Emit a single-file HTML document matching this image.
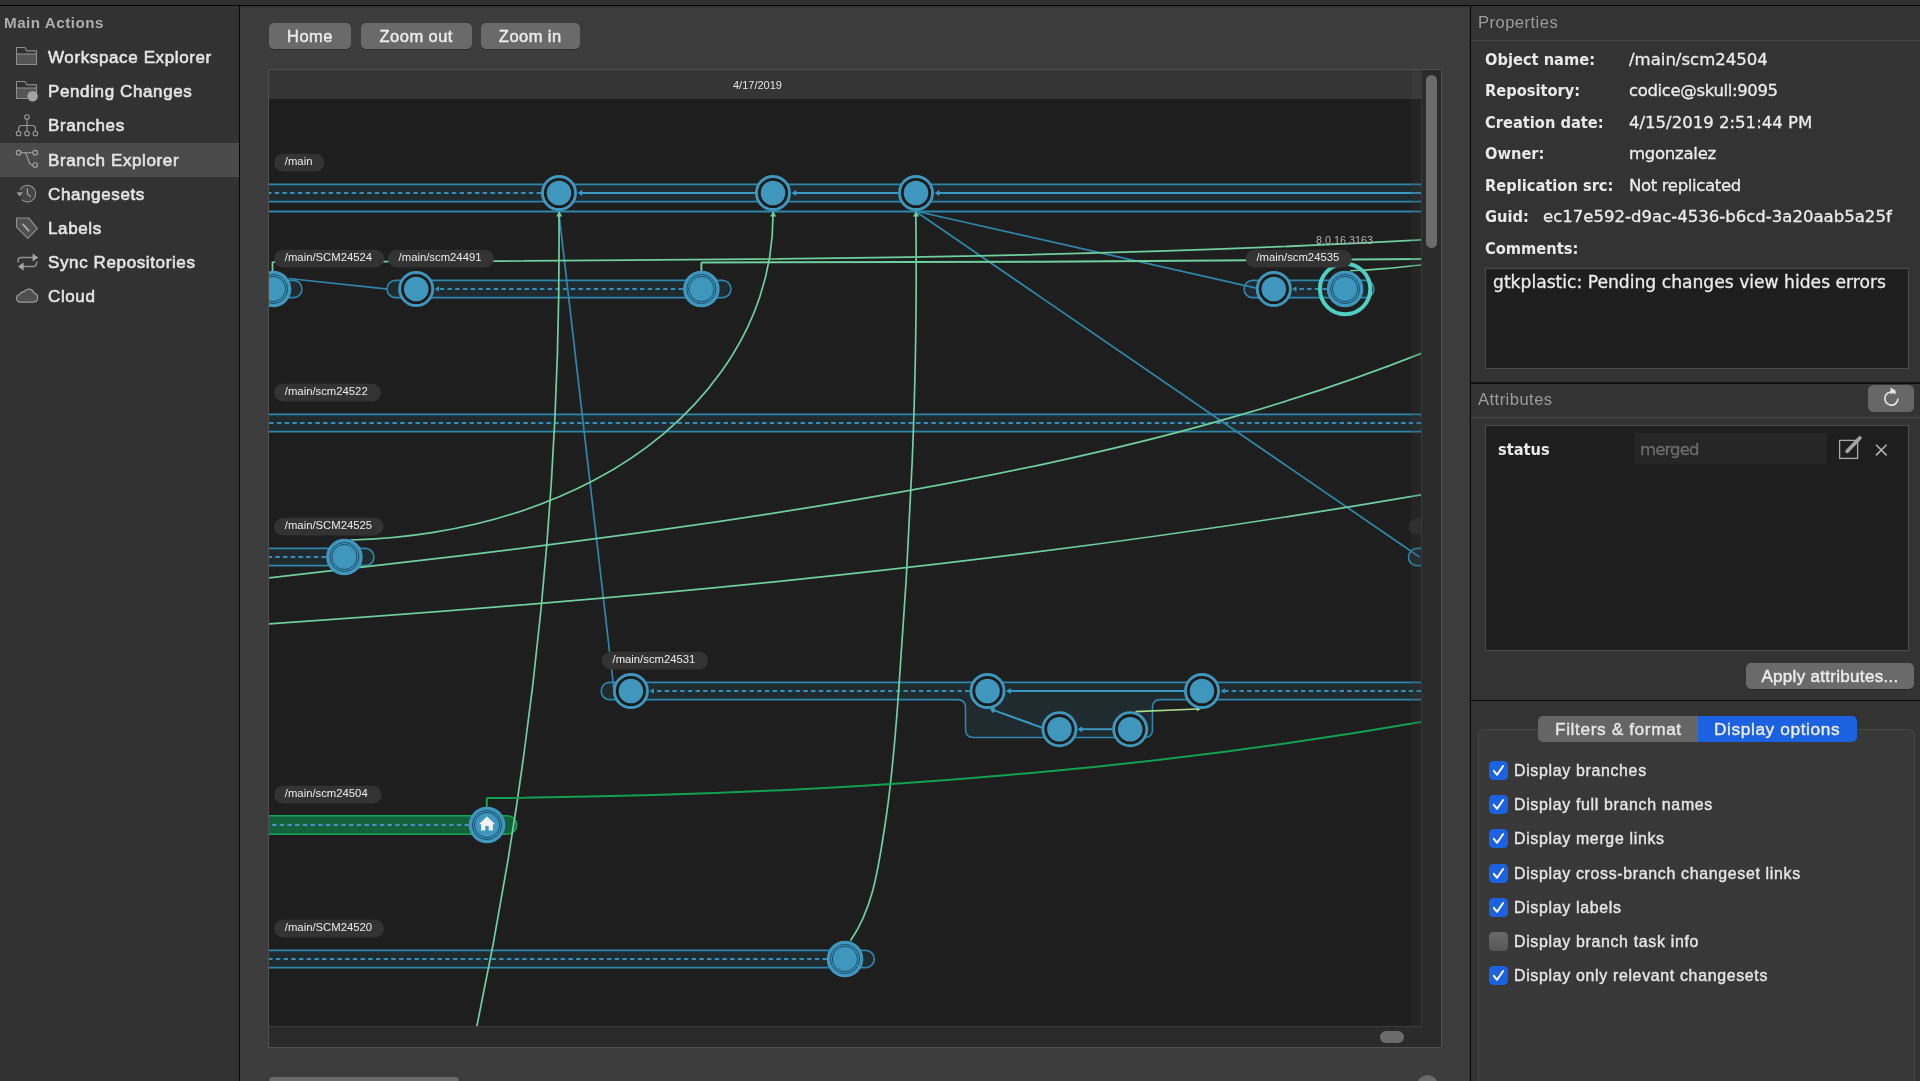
<!DOCTYPE html>
<html lang="en">
<head>
<meta charset="utf-8">
<title>Branch Explorer</title>
<style>
*{box-sizing:border-box;margin:0;padding:0}
html,body{width:1920px;height:1081px;overflow:hidden;background:#3c3c3c}
body{position:relative;font-family:"Liberation Sans",sans-serif;color:#e6e6e6;-webkit-font-smoothing:antialiased}
.abs{position:absolute}
.sbhead,.sbitem span,.btn,.phead,.plabel,.pval,.clabel,.gtxt,#graph{will-change:transform}
#topstrip{left:0;top:0;width:1920px;height:5px;background:#303030}
#topline{left:0;top:5px;width:1920px;height:1px;background:#050505}
#sidebar{left:0;top:6px;width:239px;height:1075px;background:#323232}
#vdiv1{left:239px;top:6px;width:2px;height:1075px;background:linear-gradient(90deg,#070707 0,#070707 1px,#303030 1px,#303030 2px)}
#center{left:240px;top:6px;width:1230px;height:1075px;background:#3c3c3c}
#vdiv2{left:1469px;top:6px;width:3px;height:1075px;background:linear-gradient(90deg,#323232 0,#323232 1px,#070707 1px,#070707 2px,#2e2e2e 2px,#2e2e2e 3px)}
#right{left:1471px;top:6px;width:449px;height:1075px;background:#333333}
/* sidebar */
.sbhead{left:4px;top:12.500px;font-weight:700;font-size:15.200px;letter-spacing:.5px;color:#adadad;line-height:20px;white-space:nowrap}
.sbitem{left:0;width:239px;height:34px;white-space:nowrap}
.sbitem span{position:absolute;left:48px;top:1px;line-height:34px;font-size:17px;letter-spacing:.62px;color:#e4e4e4;-webkit-text-stroke:.6px #e4e4e4}
.sbitem svg{position:absolute;left:14px;top:5px;width:26px;height:24px;overflow:visible}
.sbsel{background:#4a4a4a}
/* toolbar buttons */
.btn{background:#6a6a6a;border-radius:5px;color:#ececec;font-size:17px;letter-spacing:.45px;text-align:center;white-space:nowrap;box-shadow:0 1px 0 rgba(0,0,0,.25);-webkit-text-stroke:.45px #ececec}
/* right panel */
.phead{font-size:16.6px;letter-spacing:.45px;color:#9c9c9c;white-space:nowrap;line-height:20px}
.hline{height:1px;background:#464646}
.bline{height:1px;background:#0a0a0a}
.plabel{font-family:"DejaVu Sans Condensed","DejaVu Sans",sans-serif;font-weight:700;font-size:16.3px;color:#e9e9e9;white-space:nowrap;line-height:20px}
.pval{font-family:"DejaVu Sans",sans-serif;font-size:16.55px;color:#ececec;-webkit-text-stroke:.3px currentColor;white-space:nowrap;line-height:20px}
.darkbox{background:#1e1e1e;border:1px solid #4c4c4c}
.chk{width:19px;height:19px;border-radius:4.5px;background:#1c62e0}
.chk svg{position:absolute;left:0;top:0;width:19px;height:19px}
.chkoff{background:linear-gradient(#696969,#565656)}
.clabel{font-size:15.9px;letter-spacing:.68px;color:#e6e6e6;white-space:nowrap;line-height:20px;-webkit-text-stroke:.4px #e6e6e6}
</style>
</head>
<body>
<div id="topstrip" class="abs"></div>
<div id="topline" class="abs"></div>
<div id="sidebar" class="abs"></div>
<div id="vdiv1" class="abs"></div>
<div id="center" class="abs"></div>
<div id="vdiv2" class="abs"></div>
<div id="right" class="abs"></div>

<!-- SIDEBAR -->
<div class="abs sbhead">Main Actions</div>
<div class="abs sbitem" style="top:40px"><svg viewBox="0 0 26 24"><path d="M2.5 19.5V2.5h8.2l2.4 3.4h9.4v13.6z" fill="none" stroke="#8e8e8e" stroke-width="1.1"/><rect x="3" y="9" width="19" height="10" fill="#555"/><path d="M2.5 9h20" stroke="#8e8e8e" stroke-width="1.1"/></svg><span>Workspace Explorer</span></div>
<div class="abs sbitem" style="top:74px"><svg viewBox="0 0 26 24"><path d="M2.5 19.5V2.5h8.2l2.4 3.4h9.4v13.6z" fill="none" stroke="#8e8e8e" stroke-width="1.1"/><rect x="3" y="9" width="19" height="10" fill="#555"/><path d="M2.5 9h20" stroke="#8e8e8e" stroke-width="1.1"/><circle cx="18.6" cy="17.3" r="5.2" fill="#a4a4a4"/></svg><span>Pending Changes</span></div>
<div class="abs sbitem" style="top:108px"><svg viewBox="0 0 26 24"><g fill="none" stroke="#9a9a9a" stroke-width="1.1"><circle cx="13" cy="4" r="2.3"/><circle cx="4.6" cy="20.5" r="2.3"/><circle cx="13" cy="20.5" r="2.3"/><circle cx="21.4" cy="20.5" r="2.3"/><path d="M13 6.3v11.9M4.6 18.2v-2.5q0-3.2 3.2-3.2h10.4q3.2 0 3.2 3.2v2.5"/></g></svg><span>Branches</span></div>
<div class="abs sbitem sbsel" style="top:143px"><svg viewBox="0 0 26 24"><g fill="none" stroke="#a6a6a6" stroke-width="1.1"><circle cx="4.6" cy="4.7" r="2.3"/><circle cx="21.2" cy="4.7" r="2.3"/><circle cx="21.2" cy="17" r="2.3"/><path d="M6.9 4.7h12M10 4.7c5 0 2.5 12.3 8.9 12.3"/></g></svg><span>Branch Explorer</span></div>
<div class="abs sbitem" style="top:177px"><svg viewBox="0 0 26 24"><g fill="none" stroke="#8e8e8e" stroke-width="1.2"><path d="M6.2 7.4A8.3 8.3 0 1 1 7.6 17.6" fill="#444"/><path d="M13.4 6.4v5.3l3.3 3.2" stroke="#a4a4a4"/></g><path d="M2.6 10.4l6.3-.4-3.2 4.6z" fill="#9a9a9a"/></svg><span>Changesets</span></div>
<div class="abs sbitem" style="top:211px"><svg viewBox="0 0 26 24"><path d="M2.6 2h12.2l8.6 10.6-9.7 9.8L2.6 11.2z" fill="#505050" stroke="#8e8e8e" stroke-width="1.2" stroke-linejoin="round"/><path d="M9.2 8.6l5.4 6" stroke="#a8a8a8" stroke-width="2" stroke-linecap="round"/></svg><span>Labels</span></div>
<div class="abs sbitem" style="top:245px"><svg viewBox="0 0 26 24"><g fill="none" stroke="#909090" stroke-width="1.5"><path d="M4 12.5v-1.6q0-3.3 3.3-3.3h12"/><path d="M22.6 11.5v1.6q0 3.3-3.3 3.3h-11"/></g><path d="M18.6 3.6l5.6 4-5.6 4z" fill="#a6a6a6"/><path d="M9.6 12.4l-5.6 4 5.6 4z" fill="#a6a6a6"/></svg><span>Sync Repositories</span></div>
<div class="abs sbitem" style="top:279px"><svg viewBox="0 0 26 24"><path d="M6.6 18.2a4 4 0 0 1-.7-7.940 4.300 4.300 0 0 1 4.200-2.700 5.600 5.600 0 0 1 10 1.600 4.600 4.600 0 0 1-.5 9.040z" fill="#505050" stroke="#9a9a9a" stroke-width="1.2" stroke-linejoin="round"/></svg><span>Cloud</span></div>


<!-- TOOLBAR -->
<div class="abs btn" style="left:269px;top:23px;width:82px;height:26px;line-height:27px;font-size:16.5px">Home</div>
<div class="abs btn" style="left:361px;top:23px;width:110.500px;height:26px;line-height:27px;font-size:16.5px">Zoom out</div>
<div class="abs btn" style="left:481px;top:23px;width:98.500px;height:26px;line-height:27px;font-size:16.5px">Zoom in</div>

<!-- GRAPH PANEL -->
<div class="abs" style="left:268px;top:69px;width:1174px;height:979px;border:1px solid #505050;background:#2b2b2b"></div>
<div class="abs" style="left:269px;top:70px;width:1152px;height:29px;background:#353535"></div>
<div class="abs" style="left:269px;top:99px;width:1152px;height:927px;background:#1e1e1e"></div>
<div class="abs gtxt" style="left:732.5px;top:78px;font-size:11px;line-height:14px;color:#e4e4e4;white-space:nowrap">4/17/2019</div>
<!--GS0--><svg class="abs" id="graph" style="left:269px;top:99px" width="1152" height="927" viewBox="269 99 1152 927">
<style>.pl{font:11.3px "Liberation Sans",sans-serif;fill:#ececec}.lb{font:10.8px "Liberation Sans",sans-serif;fill:#b0b0b0}</style>
<rect x="269" y="184.4" width="1152" height="17.2" fill="#202b2f"/>
<path d="M269 184.4H1421M269 201.6H1421" fill="none" stroke="#2f86ac" stroke-width="1.6"/>
<path d="M269 211.5H1421" stroke="#2f86ac" stroke-width="1.9" fill="none"/>
<path d="M240 280.4H293.4A8.6 8.6 0 0 1 293.4 297.6H240" fill="#202b2f" stroke="#2f86ac" stroke-width="1.6"/>
<path d="M395.6 280.4H722.4A8.6 8.6 0 0 1 722.4 297.6H395.6A8.6 8.6 0 0 1 395.6 280.4Z" fill="#202b2f" stroke="#2f86ac" stroke-width="1.6"/>
<path d="M1252.6 280.4H1365.4A8.6 8.6 0 0 1 1365.4 297.6H1252.6A8.6 8.6 0 0 1 1252.6 280.4Z" fill="#202b2f" stroke="#2f86ac" stroke-width="1.6"/>
<rect x="269" y="414.4" width="1152" height="17.2" fill="#202b2f"/>
<path d="M269 414.4H1421M269 431.6H1421" fill="none" stroke="#2f86ac" stroke-width="1.6"/>
<path d="M269 548.4H365.4A8.6 8.6 0 0 1 365.4 565.6H269" fill="#202b2f" stroke="#2f86ac" stroke-width="1.6"/>
<path d="M1440 548.4H1417.1A8.6 8.6 0 0 0 1417.1 565.6H1440" fill="#202b2f" stroke="#2f86ac" stroke-width="1.6"/>
<path d="M1421 682.4H609.7A8.6 8.6 0 0 0 609.7 699.6H957.5Q965.5 699.6 965.5 707.6V729.5Q965.5 737.5 973.5 737.5H1144.5Q1152.5 737.5 1152.5 729.5V707.6Q1152.5 699.6 1160.5 699.6H1421" fill="#202b2f" stroke="#2f86ac" stroke-width="1.6"/>
<path d="M269 815.8H507.50000000000006A9.2 9.2 0 0 1 507.50000000000006 834.2H269" fill="#14603a" stroke="#13a552" stroke-width="1.6"/>
<path d="M269 950.4H865.6999999999999A8.6 8.6 0 0 1 865.6999999999999 967.6H269" fill="#202b2f" stroke="#2f86ac" stroke-width="1.6"/>
<path d="M541 193H269" stroke="#368db4" stroke-width="1.8" stroke-dasharray="4.5 3.2" fill="none"/>
<path d="M755 193H581.5" stroke="#3a9ac4" stroke-width="1.9" fill="none"/>
<path d="M577.5 193l4.8 -3v6z" fill="#3a9ac4"/>
<path d="M898 193H795.5" stroke="#3a9ac4" stroke-width="1.9" fill="none"/>
<path d="M791.5 193l4.8 -3v6z" fill="#3a9ac4"/>
<path d="M1421 193H938.5" stroke="#3a9ac4" stroke-width="1.9" fill="none"/>
<path d="M934.5 193l4.8 -3v6z" fill="#3a9ac4"/>
<path d="M683 289H438.5" stroke="#368db4" stroke-width="1.8" stroke-dasharray="4.5 3.2" fill="none"/>
<path d="M434.5 289l4.5 -2.8v5.6z" fill="#368db4"/>
<path d="M1327 289H1296" stroke="#368db4" stroke-width="1.8" stroke-dasharray="4.5 3.2" fill="none"/>
<path d="M1292 289l4.5 -2.8v5.6z" fill="#368db4"/>
<path d="M1421 423H269" stroke="#368db4" stroke-width="1.8" stroke-dasharray="4.5 3.2" fill="none"/>
<path d="M326 557H269" stroke="#368db4" stroke-width="1.8" stroke-dasharray="4.5 3.2" fill="none"/>
<path d="M969.5 691H653.5" stroke="#368db4" stroke-width="1.8" stroke-dasharray="4.5 3.2" fill="none"/>
<path d="M649.5 691l4.5 -2.8v5.6z" fill="#368db4"/>
<path d="M1184 691H1010" stroke="#3a9ac4" stroke-width="1.9" fill="none"/>
<path d="M1006 691l4.8 -3v6z" fill="#3a9ac4"/>
<path d="M1421 691H1224.5" stroke="#368db4" stroke-width="1.8" stroke-dasharray="4.5 3.2" fill="none"/>
<path d="M1220.5 691l4.5 -2.8v5.6z" fill="#368db4"/>
<path d="M1112 729.2H1081.5" stroke="#3a9ac4" stroke-width="1.9" fill="none"/>
<path d="M1077.5 729.2l4.8 -3v6z" fill="#3a9ac4"/>
<path d="M1042 727.6L993.5 710.2" stroke="#3a9ac4" stroke-width="1.9" fill="none"/><path d="M989.6 708.7l5.8 -.9 -2.2 5.6z" fill="#3a9ac4"/>
<path d="M1135.5 711.6L1197 709" stroke="#a3dc8c" stroke-width="1.6" fill="none"/><path d="M1201.5 708.7l-5 -2.4 .3 5z" fill="#a3dc8c"/>
<path d="M469 825H269" stroke="#4a8fc0" stroke-width="1.8" stroke-dasharray="4.5 3.2" fill="none"/>
<path d="M827 959H269" stroke="#368db4" stroke-width="1.8" stroke-dasharray="4.5 3.2" fill="none"/>
<path d="M558.8 212L614.2 692M919.5 212L1257.5 288.3M916.5 212L1419.5 557M288.6 278.5L388 289.2" stroke="#2f86ac" stroke-width="1.7" fill="none"/>
<path d="M773.0 213.6C773.2 242.4 768.6 270.6 759.7 297.2C750.8 323.9 737.6 348.9 721.2 371.8C704.9 394.6 685.5 415.3 664.1 433.3C642.7 451.3 619.3 466.9 594.4 480.1C569.5 493.3 543.2 504.1 516.2 512.8C489.1 521.5 461.4 528.0 433.5 532.4C405.7 536.9 377.8 539.4 350.5 540.0" stroke="#6fcf9d" stroke-width="1.7" fill="none"/>
<path d="M915.8 214.9C916.4 255.8 916.3 296.6 915.7 337.4C915.1 378.1 913.9 418.7 912.3 459.4C910.6 500.0 908.5 540.6 906.1 581.2C903.6 621.8 900.8 662.5 897.8 703.3C894.7 744.0 891.3 784.8 885.0 825.0C878.6 865.1 873.9 906.8 850.5 940.7" stroke="#6fcf9d" stroke-width="1.7" fill="none"/>
<path d="M269.2 577.8C334.0 570.6 398.9 563.2 463.9 555.3C528.8 547.5 593.7 539.3 658.5 530.2C723.3 521.2 788.0 511.3 852.4 500.4C916.9 489.5 981.2 477.5 1045.1 463.8C1109.0 450.1 1172.5 434.6 1235.3 416.4C1298.0 398.3 1360.1 377.6 1421.2 353.4" stroke="#6fcf9d" stroke-width="1.7" fill="none"/>
<path d="M269.0 623.8C653.0 597.8 1037.0 561.1 1421.0 494.8" stroke="#6fcf9d" stroke-width="1.7" fill="none"/>
<path d="M559.0 215.0C560.9 485.5 533.5 756.0 476.8 1026.5" stroke="#6fcf9d" stroke-width="1.7" fill="none"/>
<path d="M272.5 272V262" stroke="#6fcf9d" stroke-width="1.8" fill="none"/>
<path d="M272.5 262.2C655.3 259.9 1038.2 261.0 1421.0 239.9" stroke="#6fcf9d" stroke-width="1.8" fill="none"/>
<path d="M701.4 272V262.4" stroke="#6fcf9d" stroke-width="2" fill="none"/>
<path d="M701.4 262.4C941.3 262.5 1181.1 261.3 1421.0 258.9" stroke="#6fcf9d" stroke-width="2" fill="none"/>
<path d="M1350.0 270.8C1361.7 270.1 1373.2 269.6 1385.0 268.6C1396.8 267.6 1409.0 266.2 1421.0 265.0" stroke="#6fcf9d" stroke-width="1.6" fill="none"/>
<path d="M486.8 808V798" stroke="#12a150" stroke-width="2" fill="none"/>
<path d="M486.8 798.0C798.2 796.0 1109.6 776.1 1421.0 721.9" stroke="#12a150" stroke-width="2" fill="none"/>
<path d="M559.2 211l-3 5.4h6z" fill="#6fcf9d"/>
<path d="M773.2 211l-3 5.4h6z" fill="#6fcf9d"/>
<path d="M916 211l-3 5.4h6z" fill="#6fcf9d"/>
<circle cx="559" cy="193" r="18" fill="#3f97bd"/><circle cx="559" cy="193" r="15.1" fill="#1b1b1b"/><circle cx="559" cy="193" r="12.3" fill="#3f97bd"/>
<circle cx="773" cy="193" r="18" fill="#3f97bd"/><circle cx="773" cy="193" r="15.1" fill="#1b1b1b"/><circle cx="773" cy="193" r="12.3" fill="#3f97bd"/>
<circle cx="916" cy="193" r="18" fill="#3f97bd"/><circle cx="916" cy="193" r="15.1" fill="#1b1b1b"/><circle cx="916" cy="193" r="12.3" fill="#3f97bd"/>
<circle cx="273" cy="289" r="18.3" fill="#3f97bd"/><circle cx="273" cy="289" r="14.6" fill="none" stroke="#1a4c6b" stroke-width="1"/><circle cx="273" cy="289" r="12.6" fill="none" stroke="#1a4c6b" stroke-width="1"/>
<circle cx="416.2" cy="289" r="18" fill="#3f97bd"/><circle cx="416.2" cy="289" r="15.1" fill="#1b1b1b"/><circle cx="416.2" cy="289" r="12.3" fill="#3f97bd"/>
<circle cx="701.4" cy="289" r="18.3" fill="#3f97bd"/><circle cx="701.4" cy="289" r="14.6" fill="none" stroke="#1a4c6b" stroke-width="1"/><circle cx="701.4" cy="289" r="12.6" fill="none" stroke="#1a4c6b" stroke-width="1"/>
<circle cx="1273.8" cy="289" r="18" fill="#3f97bd"/><circle cx="1273.8" cy="289" r="15.1" fill="#1b1b1b"/><circle cx="1273.8" cy="289" r="12.3" fill="#3f97bd"/>
<circle cx="1345.1" cy="289" r="18.3" fill="#3f97bd"/><circle cx="1345.1" cy="289" r="14.6" fill="none" stroke="#1a4c6b" stroke-width="1"/><circle cx="1345.1" cy="289" r="12.6" fill="none" stroke="#1a4c6b" stroke-width="1"/>
<circle cx="1345.1" cy="289" r="25.2" fill="none" stroke="#4fcfc2" stroke-width="4"/>
<circle cx="344.4" cy="557" r="18.3" fill="#3f97bd"/><circle cx="344.4" cy="557" r="14.6" fill="none" stroke="#1a4c6b" stroke-width="1"/><circle cx="344.4" cy="557" r="12.6" fill="none" stroke="#1a4c6b" stroke-width="1"/>
<circle cx="630.9" cy="691" r="18" fill="#3f97bd"/><circle cx="630.9" cy="691" r="15.1" fill="#1b1b1b"/><circle cx="630.9" cy="691" r="12.3" fill="#3f97bd"/>
<circle cx="987.5" cy="691" r="18" fill="#3f97bd"/><circle cx="987.5" cy="691" r="15.1" fill="#1b1b1b"/><circle cx="987.5" cy="691" r="12.3" fill="#3f97bd"/>
<circle cx="1202" cy="691" r="18" fill="#3f97bd"/><circle cx="1202" cy="691" r="15.1" fill="#1b1b1b"/><circle cx="1202" cy="691" r="12.3" fill="#3f97bd"/>
<circle cx="1059.4" cy="729.2" r="18" fill="#3f97bd"/><circle cx="1059.4" cy="729.2" r="15.1" fill="#1b1b1b"/><circle cx="1059.4" cy="729.2" r="12.3" fill="#3f97bd"/>
<circle cx="1130.2" cy="729.2" r="18" fill="#3f97bd"/><circle cx="1130.2" cy="729.2" r="15.1" fill="#1b1b1b"/><circle cx="1130.2" cy="729.2" r="12.3" fill="#3f97bd"/>
<circle cx="487" cy="825" r="18.3" fill="#3f97bd"/><circle cx="487" cy="825" r="14.6" fill="none" stroke="#1a4c6b" stroke-width="1"/><circle cx="487" cy="825" r="12.6" fill="none" stroke="#1a4c6b" stroke-width="1"/>
<path d="M487 816.6l8.2 7.6h-2.300v6.400h-4.200v-4.600h-3.400v4.600h-4.200v-6.400h-2.300z" fill="#f2f2f2"/>
<circle cx="845" cy="959" r="18.3" fill="#3f97bd"/><circle cx="845" cy="959" r="14.6" fill="none" stroke="#1a4c6b" stroke-width="1"/><circle cx="845" cy="959" r="12.6" fill="none" stroke="#1a4c6b" stroke-width="1"/>
<rect x="274" y="153.8" width="50.5" height="17.6" rx="8.8" fill="#333333"/>
<text x="284.8" y="165.2" class="pl">/main</text>
<rect x="274" y="249.8" width="110.2" height="17.6" rx="8.8" fill="#333333"/>
<text x="284.8" y="261.2" class="pl">/main/SCM24524</text>
<rect x="387.8" y="249.8" width="106.2" height="17.6" rx="8.8" fill="#333333"/>
<text x="398.6" y="261.2" class="pl">/main/scm24491</text>
<rect x="1245.6" y="249.8" width="106.3" height="17.6" rx="8.8" fill="#333333"/>
<text x="1256.4" y="261.2" class="pl">/main/scm24535</text>
<rect x="274" y="383.8" width="107.0" height="17.6" rx="8.8" fill="#333333"/>
<text x="284.8" y="395.2" class="pl">/main/scm24522</text>
<rect x="274" y="517.8" width="109.6" height="17.6" rx="8.8" fill="#333333"/>
<text x="284.8" y="529.2" class="pl">/main/SCM24525</text>
<rect x="1408.3" y="518.2" width="40" height="16.4" rx="8.2" fill="#2c2c2c"/>
<rect x="601.7" y="651.8" width="106.5" height="17.6" rx="8.8" fill="#333333"/>
<text x="612.5" y="663.2" class="pl">/main/scm24531</text>
<rect x="274" y="785.8" width="107.7" height="17.6" rx="8.8" fill="#333333"/>
<text x="284.8" y="797.2" class="pl">/main/scm24504</text>
<rect x="274" y="919.8" width="110.0" height="17.6" rx="8.8" fill="#333333"/>
<text x="284.8" y="931.2" class="pl">/main/SCM24520</text>
<text x="1316" y="243.8" class="lb">8.0.16.3163</text>
</svg><!--GS1-->
<div class="abs" style="left:1411px;top:99px;width:10px;height:927px;background:rgba(60,60,60,.22)"></div>
<div class="abs" style="left:269px;top:1026px;width:1153px;height:1px;background:#3b3b3b"></div>
<div class="abs" style="left:1421px;top:70px;width:1px;height:957px;background:#393939"></div>
<div class="abs" style="left:240px;top:6px;width:1230px;height:2px;background:#363636"></div>
<div class="abs" style="left:1412px;top:70px;width:9px;height:29px;background:rgba(70,70,70,.35)"></div>
<div class="abs" style="left:1426px;top:75px;width:11px;height:173px;border-radius:5.5px;background:#6b6b6b"></div>
<div class="abs" style="left:1380px;top:1031px;width:24px;height:12px;border-radius:6px;background:#6b6b6b"></div>
<div class="abs" style="left:269px;top:1076.800px;width:190px;height:10px;border-radius:4px 4px 0 0;background:#6a6a6a"></div>
<div class="abs" style="left:1417px;top:1075px;width:21px;height:21px;border-radius:50%;background:#6a6a6a"></div>


<!-- RIGHT PANEL -->
<div class="abs phead" style="left:1478px;top:13px">Properties</div>
<div class="abs hline" style="left:1471px;top:39.5px;width:449px;height:1.3px"></div>
<div class="abs plabel" style="left:1485px;top:49.75px">Object name:</div><div class="abs pval" style="left:1628.5px;top:49.75px">/main/scm24504</div>
<div class="abs plabel" style="left:1485px;top:81.25px">Repository:</div><div class="abs pval" style="left:1628.5px;top:81.25px;letter-spacing:-.37px">codice@skull:9095</div>
<div class="abs plabel" style="left:1485px;top:112.75px">Creation date:</div><div class="abs pval" style="left:1628.5px;top:112.75px">4/15/2019 2:51:44 PM</div>
<div class="abs plabel" style="left:1485px;top:144.25px">Owner:</div><div class="abs pval" style="left:1628.5px;top:144.25px;letter-spacing:-.28px">mgonzalez</div>
<div class="abs plabel" style="left:1485px;top:175.75px">Replication src:</div><div class="abs pval" style="left:1628.5px;top:175.75px;letter-spacing:-.36px">Not replicated</div>
<div class="abs plabel" style="left:1485px;top:207.25px">Guid:</div><div class="abs pval" style="left:1542.5px;top:207.25px">ec17e592-d9ac-4536-b6cd-3a20aab5a25f</div>
<div class="abs plabel" style="left:1485px;top:238.75px">Comments:</div>
<div class="abs darkbox" style="left:1485px;top:267.500px;width:424px;height:101px"></div>
<div class="abs pval" style="left:1493px;top:271.5px;font-size:17.15px">gtkplastic: Pending changes view hides errors</div>
<div class="abs" style="left:1471px;top:382px;width:449px;height:2px;background:linear-gradient(#1c1c1c,#070707)"></div>
<div class="abs phead" style="left:1478px;top:390px">Attributes</div>
<div class="abs" style="left:1868px;top:385px;width:46px;height:27px;border-radius:5.500px;background:#676767"><svg width="46" height="27" viewBox="0 0 46 27" style="position:absolute;left:0;top:0"><path d="M27.8 8.600A6.600 6.600 0 1 0 30 13.600" fill="none" stroke="#e8e8e8" stroke-width="1.600"/><path d="M22.600 2.600l5.600 3.400-5.600 3.600z" fill="#e8e8e8"/></svg></div>
<div class="abs hline" style="left:1471px;top:416.500px;width:449px;height:1.300px"></div>
<div class="abs darkbox" style="left:1485px;top:425px;width:424px;height:226px"></div>
<div class="abs plabel" style="left:1497.5px;top:439.75px">status</div>
<div class="abs" style="left:1634px;top:433px;width:193px;height:31px;background:#262626"></div>
<div class="abs pval" style="left:1640px;top:439.5px;color:#6c6c6c;letter-spacing:-.9px">merged</div>
<svg class="abs" style="left:1838px;top:434px" width="26" height="26" viewBox="0 0 26 26"><rect x="1.600" y="6.400" width="18" height="18" fill="none" stroke="#a9a9a9" stroke-width="1.300"/><path d="M9.200 17.200L21.800 4" stroke="#a4a4a4" stroke-width="3.800" stroke-linecap="round" fill="none"/><path d="M7.800 18.800l.6-3.400 2.800 2.700z" fill="#a4a4a4"/></svg>
<svg class="abs" style="left:1874px;top:442.500px" width="14" height="14" viewBox="0 0 14 14"><path d="M2 1.800l10.600 10.600M12.600 1.800L2 12.400" stroke="#b6b6b6" stroke-width="1.500" fill="none"/></svg>
<div class="abs btn" style="left:1746px;top:663px;width:168px;height:26px;line-height:27px;letter-spacing:.3px">Apply attributes...</div>
<div class="abs bline" style="left:1471px;top:699.500px;width:449px;height:1.300px"></div>
<div class="abs" style="left:1478px;top:728.500px;width:437px;height:380px;border:1px solid #474747;border-radius:6px;background:#383838"></div>
<div class="abs" style="left:1538px;top:716px;width:160px;height:26px;border-radius:5px 0 0 5px;background:#656565"></div>
<div class="abs" style="left:1698px;top:716px;width:159px;height:26px;border-radius:0 5px 5px 0;background:#1c62e0"></div>
<div class="abs clabel" style="left:1555px;top:719px;font-size:17.300px;letter-spacing:.6px">Filters &amp; format</div>
<div class="abs clabel" style="left:1713.500px;top:719px;font-size:17.300px;letter-spacing:.6px;color:#f4f4f4">Display options</div>
<div class="abs chk" style="left:1488.750px;top:760.80px"><svg viewBox="0 0 19 19"><path d="M4.800 9.800l3.300 4 6-8.800" fill="none" stroke="#fff" stroke-width="2" stroke-linecap="round" stroke-linejoin="round"/></svg></div><div class="abs clabel" style="left:1514px;top:760.90px">Display branches</div>
<div class="abs chk" style="left:1488.750px;top:795.05px"><svg viewBox="0 0 19 19"><path d="M4.800 9.800l3.300 4 6-8.800" fill="none" stroke="#fff" stroke-width="2" stroke-linecap="round" stroke-linejoin="round"/></svg></div><div class="abs clabel" style="left:1514px;top:795.15px">Display full branch names</div>
<div class="abs chk" style="left:1488.750px;top:829.30px"><svg viewBox="0 0 19 19"><path d="M4.800 9.800l3.300 4 6-8.800" fill="none" stroke="#fff" stroke-width="2" stroke-linecap="round" stroke-linejoin="round"/></svg></div><div class="abs clabel" style="left:1514px;top:829.40px">Display merge links</div>
<div class="abs chk" style="left:1488.750px;top:863.55px"><svg viewBox="0 0 19 19"><path d="M4.800 9.800l3.300 4 6-8.800" fill="none" stroke="#fff" stroke-width="2" stroke-linecap="round" stroke-linejoin="round"/></svg></div><div class="abs clabel" style="left:1514px;top:863.65px">Display cross-branch changeset links</div>
<div class="abs chk" style="left:1488.750px;top:897.80px"><svg viewBox="0 0 19 19"><path d="M4.800 9.800l3.300 4 6-8.800" fill="none" stroke="#fff" stroke-width="2" stroke-linecap="round" stroke-linejoin="round"/></svg></div><div class="abs clabel" style="left:1514px;top:897.90px">Display labels</div>
<div class="abs chk chkoff" style="left:1488.750px;top:932.05px"></div><div class="abs clabel" style="left:1514px;top:932.15px">Display branch task info</div>
<div class="abs chk" style="left:1488.750px;top:966.30px"><svg viewBox="0 0 19 19"><path d="M4.800 9.800l3.300 4 6-8.800" fill="none" stroke="#fff" stroke-width="2" stroke-linecap="round" stroke-linejoin="round"/></svg></div><div class="abs clabel" style="left:1514px;top:966.40px">Display only relevant changesets</div>


</body>
</html>
